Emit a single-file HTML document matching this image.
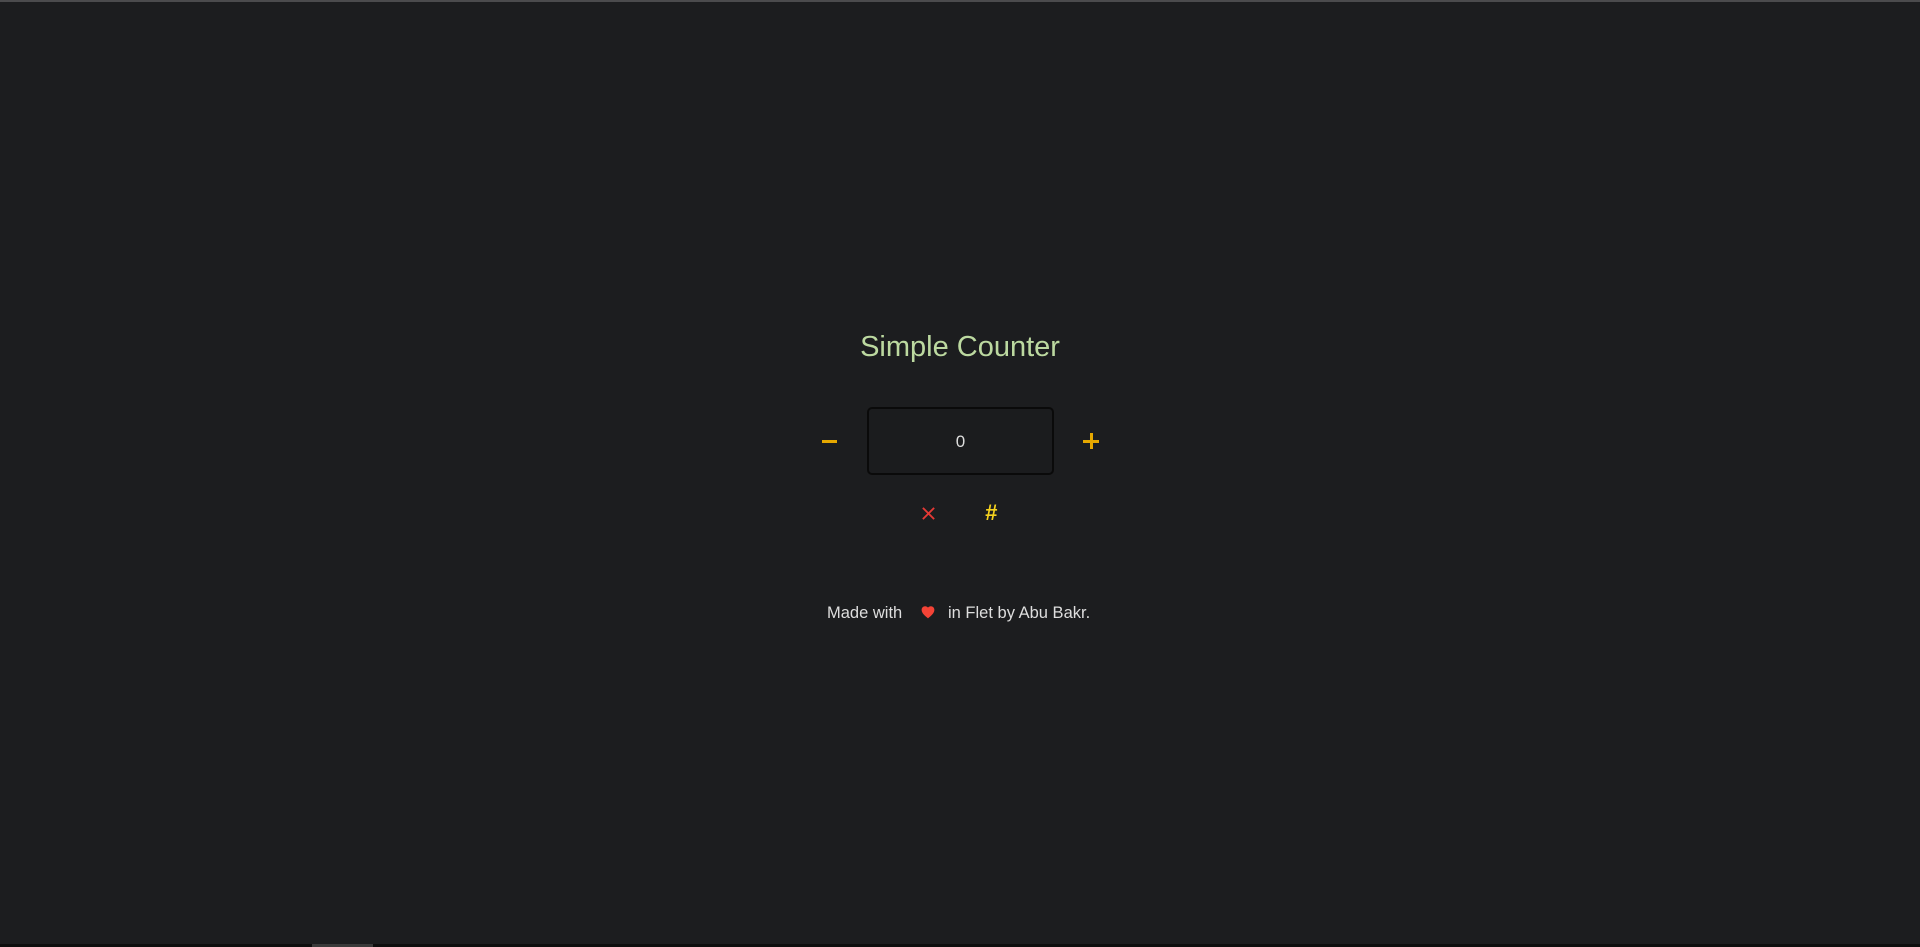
<!DOCTYPE html>
<html><head><meta charset="utf-8"><style>
html,body{margin:0;padding:0;width:1920px;height:947px;background:#1c1d1f;overflow:hidden;font-family:"Liberation Sans",sans-serif;position:relative}
.a{position:absolute}
</style></head><body>
<div class="a" style="left:0;top:0;width:1920px;height:2px;background:#4b4b4d"></div>
<div class="a" style="left:0;top:944px;width:1920px;height:3px;background:#0e0e0e"></div>
<div class="a" style="left:312px;top:944px;width:61px;height:3px;background:#3a3a3a"></div>
<div class="a" style="left:760px;top:329px;width:400px;text-align:center;font-size:29px;color:#bcd9a0;line-height:36px">Simple Counter</div>
<div class="a" style="left:867px;top:407px;width:183px;height:64px;border:2px solid #0a0a0a;border-radius:5px;background:#1b1c1e"></div>
<div class="a" style="left:867px;top:431px;width:187px;text-align:center;font-size:17px;color:#dedede;line-height:22px">0</div>
<div class="a" style="left:822px;top:440px;width:15px;height:2.5px;background:#e6a800"></div>
<div class="a" style="left:1083px;top:440px;width:16px;height:2.5px;background:#e6a800"></div>
<div class="a" style="left:1090px;top:433px;width:2.5px;height:16px;background:#e6a800"></div>
<svg class="a" style="left:921px;top:506px" width="15" height="15" viewBox="0 0 16 16"><path d="M2 2L14 14M14 2L2 14" stroke="#e53935" stroke-width="2"/></svg>
<div class="a" style="left:976px;top:499px;width:30px;text-align:center;font-size:22px;font-weight:bold;font-style:italic;color:#f5d21e;line-height:28px">#</div>
<div class="a" style="left:827px;top:603px;font-size:16.5px;color:#dedede;line-height:20px;white-space:nowrap">Made with</div>
<svg class="a" style="left:920px;top:605px" width="16" height="14" viewBox="0 0 24 22"><path d="M12 21l-1.5-1.3C5 15 2 12 2 7.5 2 4.4 4.4 2 7.5 2c1.7 0 3.4.8 4.5 2.1C13.1 2.8 14.8 2 16.5 2 19.6 2 22 4.4 22 7.5c0 4.5-3 7.5-8.5 12.2z" fill="#f44336"/></svg>
<div class="a" style="left:948px;top:603px;font-size:16.5px;color:#dedede;line-height:20px;white-space:nowrap">in Flet by Abu Bakr.</div>
</body></html>
